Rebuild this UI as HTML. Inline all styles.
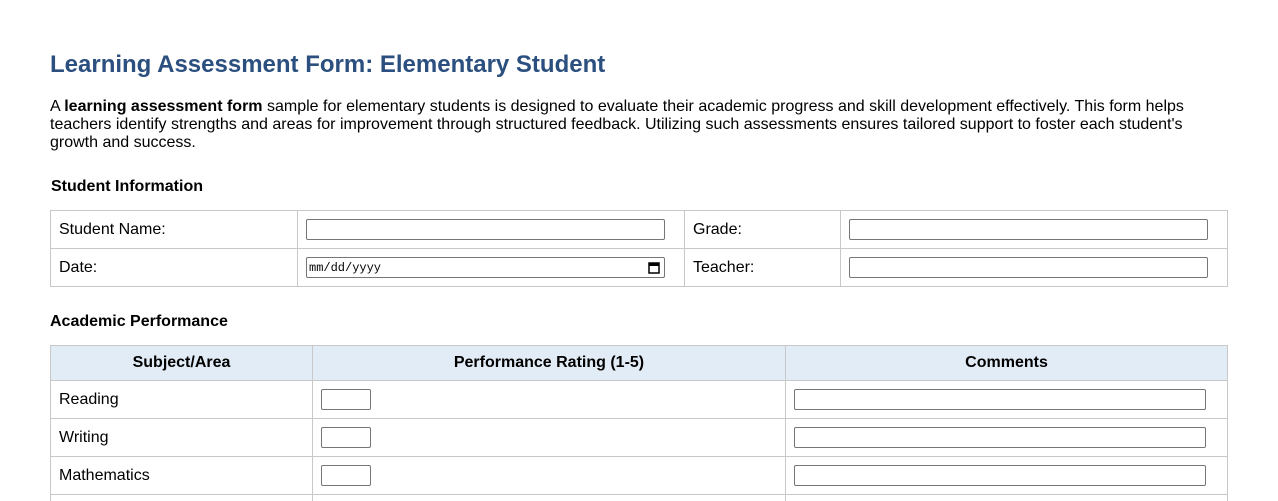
<!DOCTYPE html>
<html><head><style>
body{margin:0;background:#fff;font-family:"Liberation Sans",Arial,sans-serif;color:#000;}
.wrap{position:relative;width:1278px;height:501px;overflow:hidden;}
h1{position:absolute;left:50px;top:51px;margin:0;font-size:24px;font-weight:bold;color:#2b4f7e;}
p{position:absolute;left:50px;top:98px;width:1160px;margin:0;font-size:16px;line-height:18px;}
h3{position:absolute;left:51px;margin:0;font-size:16px;font-weight:bold;}
table{position:absolute;left:50px;width:1177px;border-collapse:collapse;table-layout:fixed;font-size:16px;}
td,th{border:1px solid #c8c8c8;padding:0 8px;height:37px;text-align:left;}
th{background:#e2ecf6;text-align:center;height:34px;}
input{box-sizing:border-box;height:21px;border:1px solid #767676;border-radius:2px;margin:0;padding:0 2px;font-size:12px;display:block;}
.date{font-family:"Liberation Mono",monospace;font-size:12px;position:relative;}
</style></head><body><div class="wrap">
<h1>Learning Assessment Form: Elementary Student</h1>
<p>A <b>learning assessment form</b> sample for elementary students is designed to evaluate their academic progress and skill development effectively. This form helps teachers identify strengths and areas for improvement through structured feedback. Utilizing such assessments ensures tailored support to foster each student's growth and success.</p>
<h3 style="top:178px">Student Information</h3>
<table style="top:210px">
<colgroup><col style="width:247px"><col style="width:387px"><col style="width:156px"><col style="width:387px"></colgroup>
<tr><td>Student Name:</td><td><input style="width:359px"></td><td>Grade:</td><td><input style="width:359px"></td></tr>
<tr><td>Date:</td><td><div class="date" style="width:359px;height:21px;border:1px solid #767676;border-radius:2px;box-sizing:border-box;line-height:21px;padding-left:2px;">mm/dd/yyyy<svg style="position:absolute;right:4px;top:3px" width="12" height="13" viewBox="0 0 12 13"><rect x="1" y="2" width="10" height="10" fill="none" stroke="#000" stroke-width="1.5"/><rect x="1" y="2" width="10" height="3" fill="#000"/></svg></div></td><td>Teacher:</td><td><input style="width:359px"></td></tr>
</table>
<h3 style="top:313px;left:50px">Academic Performance</h3>
<table style="top:345px">
<colgroup><col style="width:262px"><col style="width:473px"><col style="width:442px"></colgroup>
<tr><th>Subject/Area</th><th>Performance Rating (1-5)</th><th>Comments</th></tr>
<tr><td>Reading</td><td><input style="width:50px"></td><td><input style="width:412px"></td></tr>
<tr><td>Writing</td><td><input style="width:50px"></td><td><input style="width:412px"></td></tr>
<tr><td>Mathematics</td><td><input style="width:50px"></td><td><input style="width:412px"></td></tr>
<tr><td>Science</td><td><input style="width:50px"></td><td><input style="width:412px"></td></tr>
</table>
</div></body></html>
